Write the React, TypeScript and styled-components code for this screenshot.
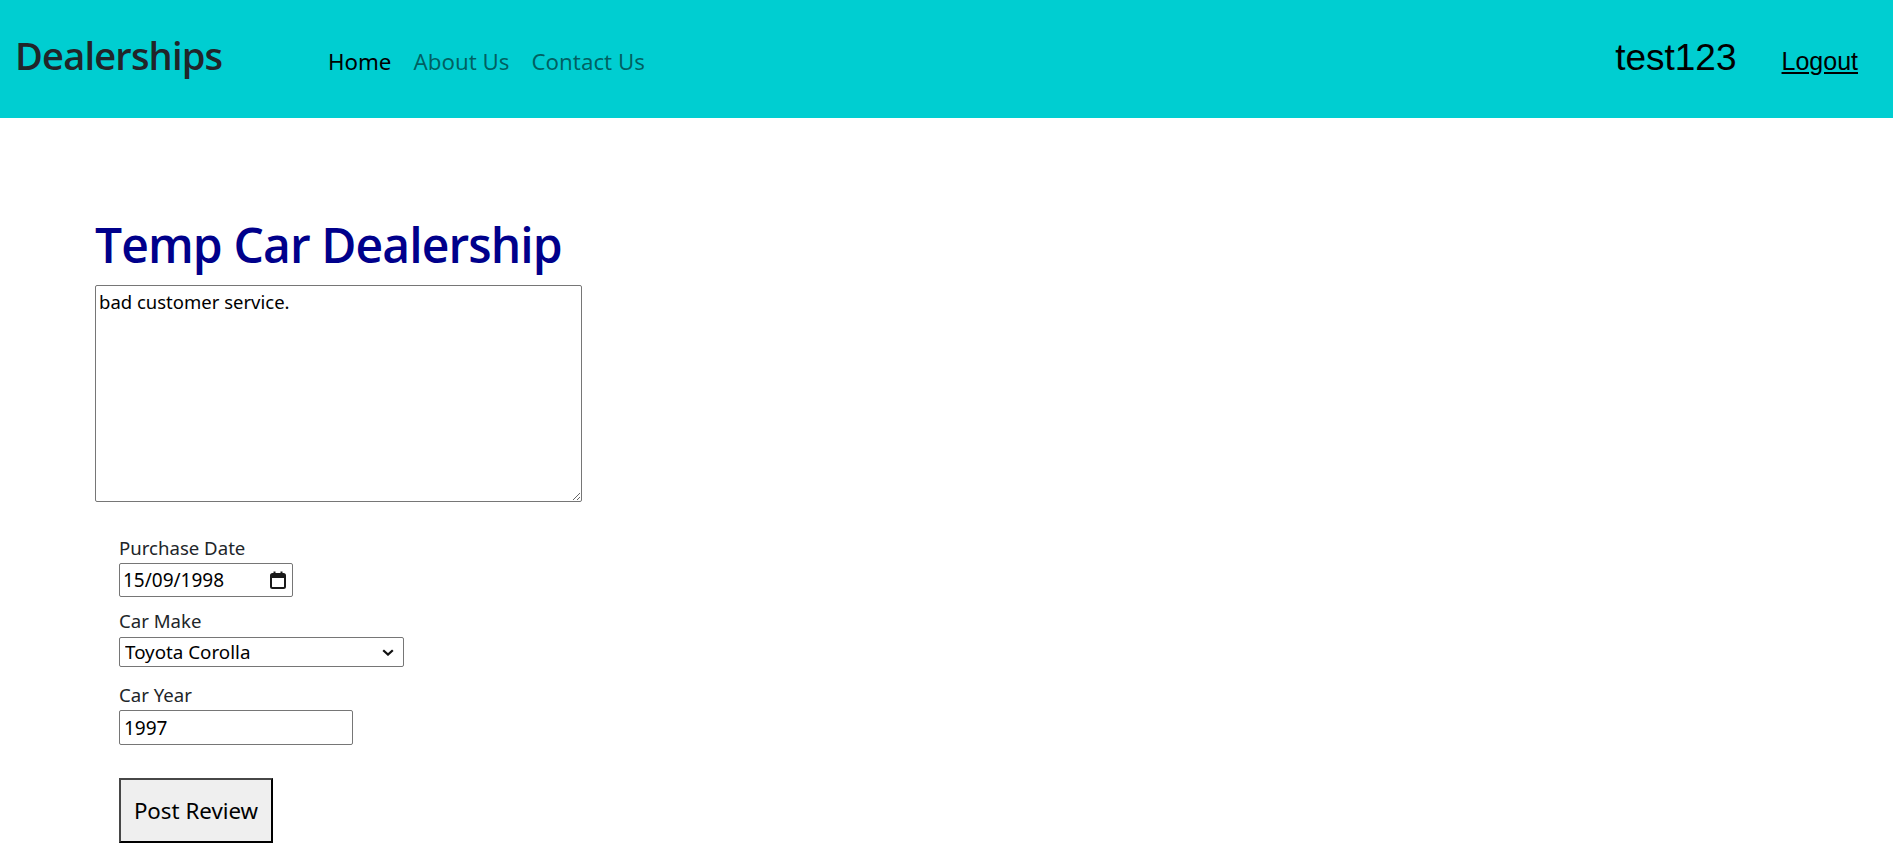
import React from 'react';
import styled, { createGlobalStyle } from 'styled-components';

const GlobalStyle = createGlobalStyle`
  body {
    margin: 0;
    background: #fff;
    font-family: 'Noto Sans', 'Open Sans', sans-serif;
    color: #212529;
  }
`;

const Header = styled.header`
  display: flex;
  align-items: baseline;
  height: 118px;
  box-sizing: border-box;
  padding: 29px 35px 0 15px;
  background: #00ced1;
`;

const Brand = styled.div`
  width: 302px;
  font-family: 'Open Sans', 'Noto Sans', sans-serif;
  font-size: 38px;
  font-weight: 600;
  letter-spacing: -0.8px;
  color: #212529;
`;

const Nav = styled.nav`
  display: flex;
  flex: 1;
`;

const NavLink = styled.a<{ $active?: boolean }>`
  padding: 0 11px;
  font-size: 22.3px;
  color: ${(p) => (p.$active ? '#000' : 'rgba(0, 0, 0, 0.55)')};
  text-decoration: none;
  cursor: pointer;
`;

const UserName = styled.span`
  font-family: 'Liberation Sans', Arial, sans-serif;
  font-size: 37px;
  color: #000;
  margin-right: 45px;
`;

const Logout = styled.a`
  font-family: 'Liberation Sans', Arial, sans-serif;
  font-size: 25px;
  color: #000;
  text-decoration: underline;
  cursor: pointer;
`;

const Main = styled.main`
  padding: 97px 0 0 95px;
`;

const Title = styled.h1`
  margin: 0 0 10px;
  font-family: 'Open Sans', 'Noto Sans', sans-serif;
  font-size: 48px;
  font-weight: 600;
  line-height: 60px;
  letter-spacing: -0.9px;
  color: #00008b;
`;

const ReviewBox = styled.textarea`
  display: block;
  box-sizing: border-box;
  width: 487px;
  height: 217px;
  margin: 0;
  padding: 3px 3px;
  border: 1px solid #767676;
  border-radius: 2px;
  font-family: inherit;
  font-size: 18.5px;
  color: #000;
`;

const Form = styled.div`
  display: flex;
  flex-direction: column;
  align-items: flex-start;
  padding: 31px 0 0 24px;
`;

const Field = styled.div<{ $gap: number }>`
  display: flex;
  flex-direction: column;
  align-items: flex-start;
  margin-bottom: ${(p) => p.$gap}px;
`;

const Label = styled.label`
  display: block;
  font-size: 18.6px;
  line-height: 30px;
  color: #212529;
`;

const DateBox = styled.div`
  display: flex;
  align-items: center;
  box-sizing: border-box;
  width: 174px;
  height: 34px;
  padding: 0 6px 0 3px;
  border: 1px solid #767676;
  border-radius: 2px;
  background: #fff;
`;

const PlainInput = styled.input`
  flex: 1;
  min-width: 0;
  padding: 0;
  border: none;
  outline: none;
  font-family: inherit;
  font-size: 19px;
  color: #000;
  background: transparent;
`;

const SelectWrap = styled.div`
  position: relative;
  margin-top: 1px;
`;

const Select = styled.select`
  display: block;
  box-sizing: border-box;
  width: 285px;
  height: 30px;
  padding: 0 30px 0 5px;
  border: 1px solid #767676;
  border-radius: 2px;
  background: #fff;
  appearance: none;
  font-family: inherit;
  font-size: 18.8px;
  color: #000;
`;

const Chevron = styled.svg`
  position: absolute;
  top: 12px;
  right: 10px;
  pointer-events: none;
`;

const YearInput = styled.input`
  box-sizing: border-box;
  width: 234px;
  height: 35px;
  padding: 0 4px;
  border: 1px solid #767676;
  border-radius: 2px;
  font-family: inherit;
  font-size: 19px;
  color: #000;
`;

const PostButton = styled.button`
  box-sizing: border-box;
  width: 154px;
  height: 65px;
  margin-top: 33px;
  padding: 0;
  border: 2px solid;
  border-color: #474747 #000 #000 #474747;
  background: #efefef;
  font-family: inherit;
  font-size: 22.3px;
  color: #000;
  cursor: pointer;
`;

const CalendarIcon = () => (
  <svg width="16" height="18" viewBox="0 0 16 18" fill="none">
    <rect x="1" y="3" width="14" height="14" rx="1.5" stroke="#1a1a1a" strokeWidth="2" />
    <rect x="1" y="3" width="14" height="4" fill="#1a1a1a" />
    <rect x="3.5" y="0.5" width="2" height="3" fill="#1a1a1a" />
    <rect x="10.5" y="0.5" width="2" height="3" fill="#1a1a1a" />
  </svg>
);

export default function App() {
  return (
    <>
      <GlobalStyle />
      <Header>
        <Brand>Dealerships</Brand>
        <Nav>
          <NavLink $active>Home</NavLink>
          <NavLink>About Us</NavLink>
          <NavLink>Contact Us</NavLink>
        </Nav>
        <UserName>test123</UserName>
        <Logout>Logout</Logout>
      </Header>
      <Main>
        <Title>Temp Car Dealership</Title>
        <ReviewBox defaultValue="bad customer service." />
        <Form>
          <Field $gap={9}>
            <Label>Purchase Date</Label>
            <DateBox>
              <PlainInput defaultValue="15/09/1998" />
              <CalendarIcon />
            </DateBox>
          </Field>
          <Field $gap={13}>
            <Label>Car Make</Label>
            <SelectWrap>
              <Select defaultValue="Toyota Corolla">
                <option>Toyota Corolla</option>
              </Select>
              <Chevron width="12" height="7" viewBox="0 0 12 7">
                <path d="M1.2 1.2 6 5.6l4.8-4.4" stroke="#111" strokeWidth="2.2" fill="none" />
              </Chevron>
            </SelectWrap>
          </Field>
          <Field $gap={0}>
            <Label>Car Year</Label>
            <YearInput defaultValue="1997" />
          </Field>
          <PostButton>Post Review</PostButton>
        </Form>
      </Main>
    </>
  );
}
